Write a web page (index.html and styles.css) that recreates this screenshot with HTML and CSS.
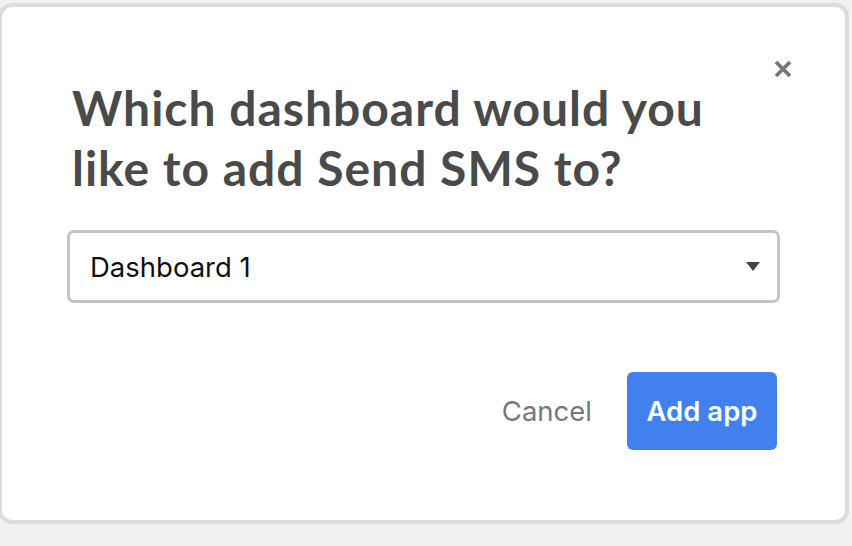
FILE: index.html
```html
<!DOCTYPE html>
<html>
<head>
<meta charset="utf-8">
<link rel="stylesheet" href="styles.css">
</head>
<body>
<div class="modal">
  <button class="close" aria-label="Close">
    <svg width="20" height="20" viewBox="0 0 20 20"><path d="M3 3 L17 17 M17 3 L3 17" stroke="#777" stroke-width="3.8" stroke-linecap="butt"/></svg>
  </button>
  <h1 class="title">Which dashboard would you like to add Send SMS to?</h1>
  <div class="select">
    <span class="select-value">Dashboard 1</span>
    <span class="caret"></span>
  </div>
  <div class="actions">
    <button class="btn-cancel">Cancel</button>
    <button class="btn-primary">Add app</button>
  </div>
</div>
</body>
</html>
```
FILE: styles.css
```css
html, body {
  margin: 0;
  padding: 0;
  background: #f1f1f1;
  width: 852px;
  height: 546px;
  overflow: hidden;
}
.modal {
  position: relative;
  box-sizing: border-box;
  margin: 3px 0 0 -2px;
  width: 851px;
  height: 521px;
  background: #fff;
  border: 4px solid #dcdcdc;
  border-radius: 14px;
  padding: 71px 67px 0 70px;
  display: flex;
  flex-direction: column;
}
.close {
  position: absolute;
  top: 50px;
  right: 50px;
  width: 24px;
  height: 24px;
  padding: 2px;
  border: 0;
  background: none;
  display: flex;
  align-items: center;
  justify-content: center;
}
.title {
  margin: 0;
  font-family: Lato, "Noto Sans", sans-serif;
  font-weight: 700;
  font-size: 48px;
  letter-spacing: 1px;
  line-height: 60px;
  color: #4a4a4a;
  width: 700px;
}
.select {
  margin-top: 32px;
  margin-left: -5px;
  box-sizing: border-box;
  width: 713px;
  height: 73px;
  border: 3px solid #c4c4c4;
  border-radius: 7px;
  display: flex;
  align-items: center;
  justify-content: space-between;
  padding: 0 17px 0 20px;
}
.select-value {
  font-family: Inter, "Liberation Sans", Arial, sans-serif;
  font-size: 27.5px;
  color: #111;
}
.caret {
  width: 0;
  height: 0;
  border-left: 7px solid transparent;
  border-right: 7px solid transparent;
  border-top: 9px solid #444;
}
.actions {
  margin-top: 69px;
  display: flex;
  justify-content: flex-end;
  align-items: center;
  gap: 35px;
  padding-right: 1px;
}
.btn-cancel {
  border: 0;
  background: none;
  padding: 0;
  font-family: Inter, "Liberation Sans", Arial, sans-serif;
  font-size: 27.5px;
  color: #777;
}
.btn-primary {
  border: 0;
  width: 150px;
  height: 78px;
  border-radius: 6px;
  background: #4181ee;
  color: #fff;
  font-family: Inter, "Liberation Sans", Arial, sans-serif;
  font-weight: 600;
  font-size: 27.5px;
}
```
